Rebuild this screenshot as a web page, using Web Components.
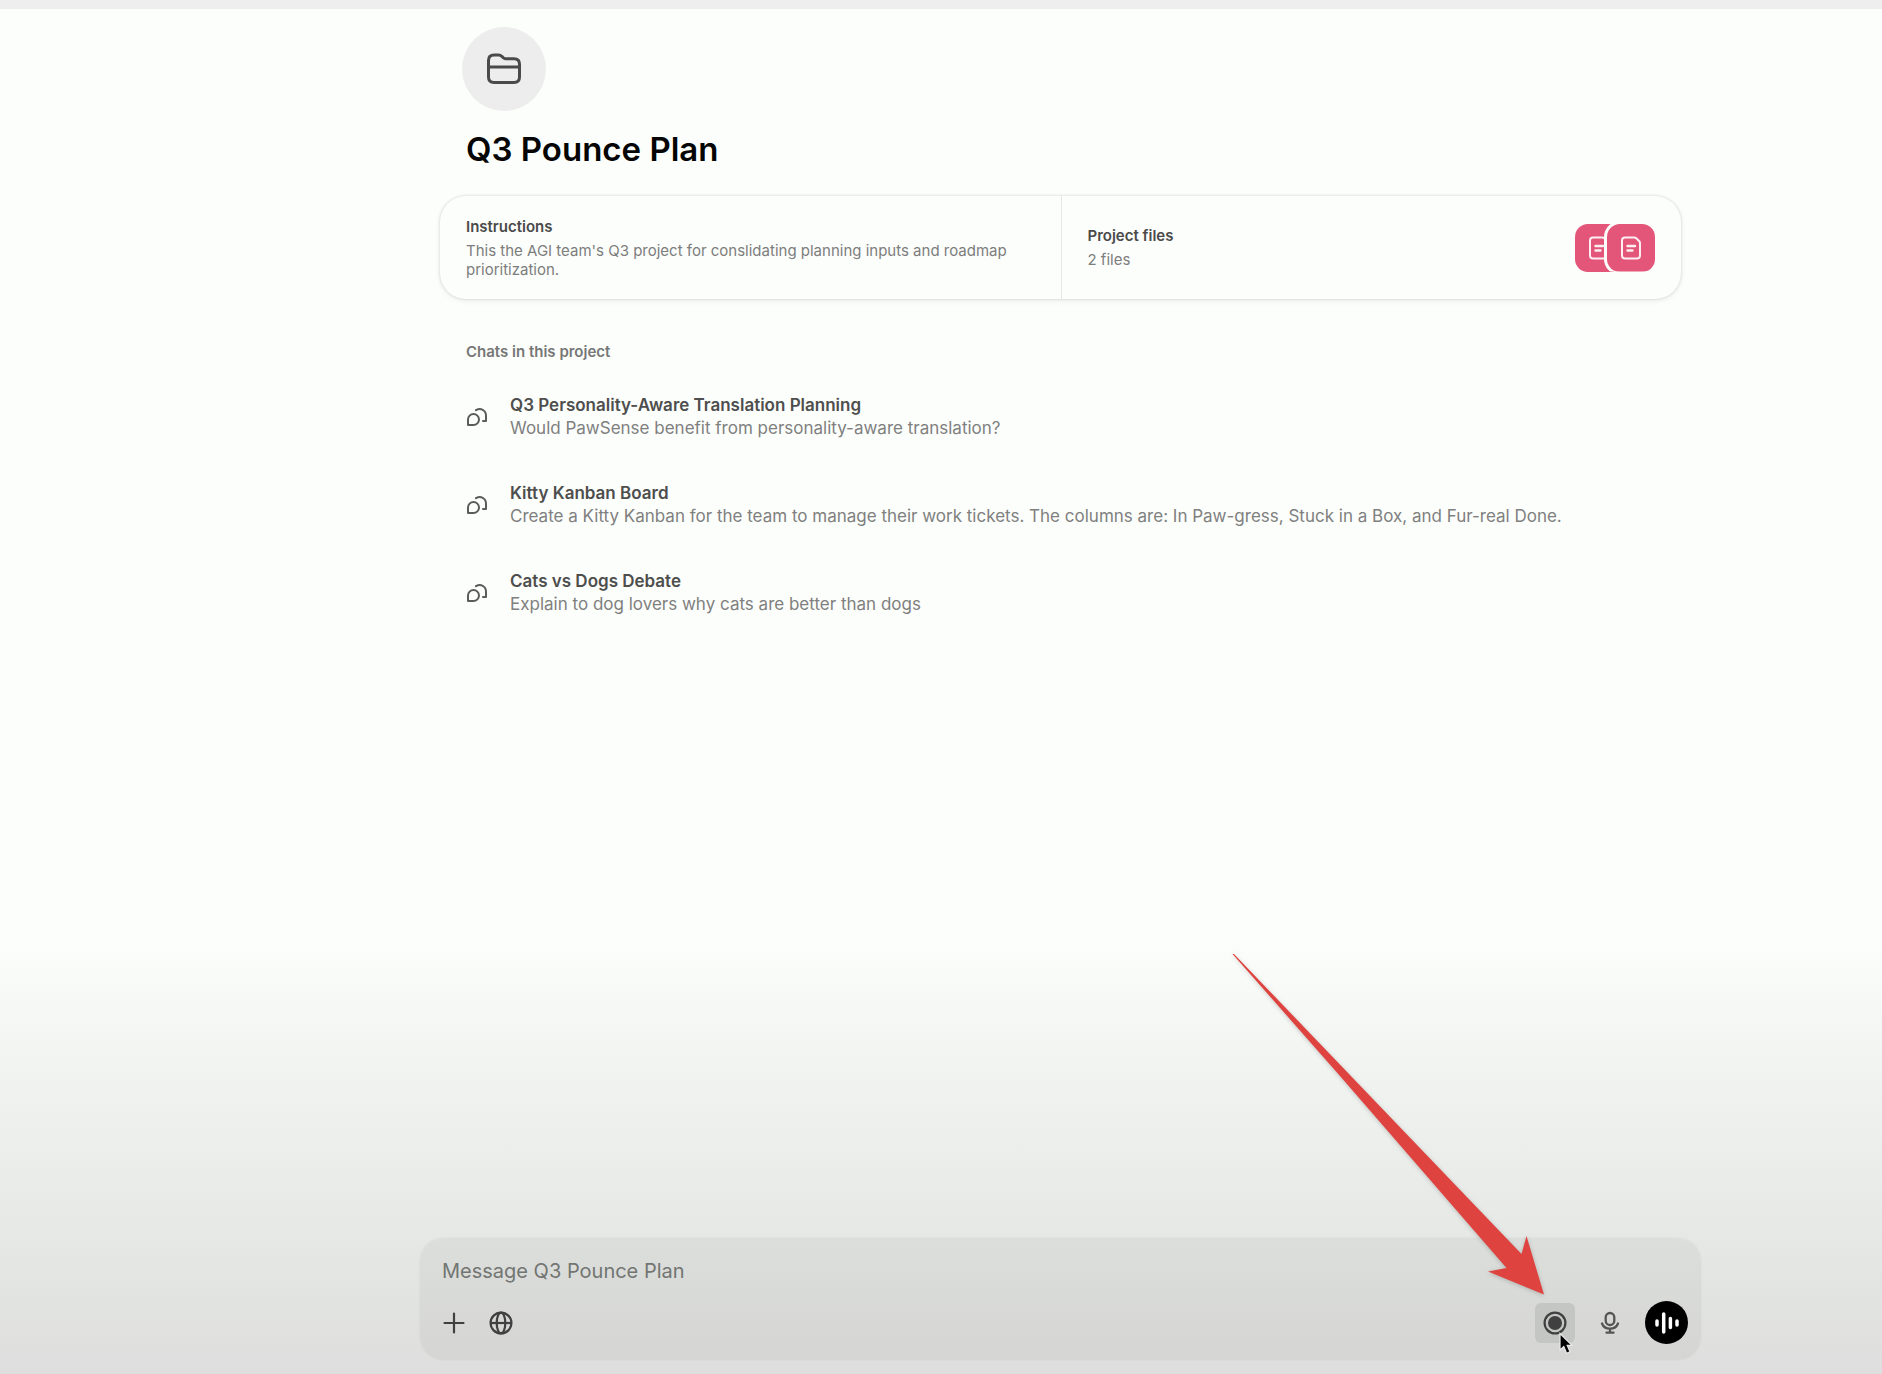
<!DOCTYPE html>
<html lang="en">
<head>
<meta charset="utf-8">
<meta name="viewport" content="width=device-width, initial-scale=1">
<title>Q3 Pounce Plan</title>
<style>
body {
    margin: 0;
    font-family: Inter, "Liberation Sans", sans-serif;
}
</style>
</head>
<body>

<project-page>
    <project-header slot="header">Q3 Pounce Plan</project-header>

    <project-summary>
        <span slot="instructions">This the AGI team's Q3 project for conslidating planning inputs and roadmap prioritization.</span>
        <span slot="files">2 files</span>
    </project-summary>

    <chat-list heading="Chats in this project">
        <chat-item heading="Q3 Personality-Aware Translation Planning">Would PawSense benefit from personality-aware translation?</chat-item>
        <chat-item heading="Kitty Kanban Board">Create a Kitty Kanban for the team to manage their work tickets. The columns are: In Paw-gress, Stuck in a Box, and Fur-real Done.</chat-item>
        <chat-item heading="Cats vs Dogs Debate">Explain to dog lovers why cats are better than dogs</chat-item>
    </chat-list>

    <message-composer slot="footer" placeholder="Message Q3 Pounce Plan"></message-composer>
</project-page>

<script>
// small helper: every element clones its own markup into an open shadow root
class BaseElement extends HTMLElement {
    constructor() {
        super();
        this.attachShadow({ mode: "open" });
        const template = document.createElement("template");
        template.innerHTML = this.constructor.markup;
        this.shadowRoot.appendChild(template.content.cloneNode(true));
    }
}

class ProjectPage extends BaseElement {
    static markup = `
<style>
:host {
    display: flex;
    flex-direction: column;
    box-sizing: border-box;
    min-height: 100vh;
    padding-left: 239px;
    background: linear-gradient(#fcfefb 0, #fcfefb 68%, #f2f4f1 77%, #e6e8e5 90%, #dddedd 100%);
    border-top: 9px solid #edeeed;
}

main {
    flex-grow: 1;
    width: 100%;
    max-width: 1241px;
    margin: 0 auto;
}

footer {
    width: 100%;
    max-width: 1279px;
    margin: 0 auto;
    padding-bottom: 15px;
}
</style>
<main>
    <slot name="header"></slot>
    <slot></slot>
</main>
<footer><slot name="footer"></slot></footer>`;
}

class ProjectHeader extends BaseElement {
    static markup = `
<style>
:host {
    display: block;
    padding: 18px 22px 0;
}

.badge {
    display: flex;
    align-items: center;
    justify-content: center;
    width: 84px;
    height: 84px;
    padding: 0;
    border: 0;
    border-radius: 50%;
    background: #ecedec;
    color: #4a4a4a;
}

h1 {
    margin: 17px 4px 0;
    font-size: 33px;
    line-height: 42px;
    font-weight: 600;
    color: #050505;
}
</style>
<button class="badge" aria-label="Project icon">
    <svg width="36" height="34" viewBox="0 0 36 34" fill="none" stroke="currentColor" stroke-width="3" stroke-linejoin="round">
        <path d="M2.500 25V8.500Q2.500 3 8 3H12.500Q14.500 3 16 4.500L17.500 5.800Q18.600 6.700 20 6.700H28Q33.500 6.700 33.500 12.200V25Q33.500 30.500 28 30.500H8Q2.500 30.500 2.500 25Z"/>
        <path d="M3 15H33"/>
    </svg>
</button>
<h1><slot></slot></h1>`;
}

class FileBadge extends BaseElement {
    static markup = `
<style>
:host {
    display: flex;
    align-items: center;
    justify-content: center;
    width: 48px;
    height: 48px;
    border-radius: 13px;
    background: #e3567a;
    color: #fdeef2;
}
</style>
<svg width="22" height="26" viewBox="0 0 22 26" fill="none" stroke="currentColor" stroke-width="2" stroke-linejoin="round" stroke-linecap="round">
    <path d="M5 2.500H14.500Q15.500 2.500 16.200 3.200L19.300 6.300Q20 7 20 8V20.500Q20 23.500 17 23.500H5Q2 23.500 2 20.500V5.500Q2 2.500 5 2.500Z"/>
    <path d="M7.500 11H15M7.500 15.500H12.500" stroke-width="2.400"/>
</svg>`;
}

class ProjectSummary extends BaseElement {
    static markup = `
<style>
:host {
    display: grid;
    grid-template-columns: 1fr 1fr;
    margin-top: 26px;
    border-radius: 26px;
    background: #fcfefb;
    box-shadow: 0 0 3px rgba(0, 0, 0, 0.16), 0 2px 6px rgba(0, 0, 0, 0.06);
}

button {
    display: flex;
    align-items: center;
    justify-content: space-between;
    min-height: 103px;
    padding: 16px 26px;
    border: 0;
    background: none;
    font: inherit;
    font-size: 15px;
    line-height: 19px;
    text-align: left;
    color: #7d7d7d;
}

button + button {
    border-left: 1px solid #e6e7e6;
}

strong {
    display: block;
    margin-bottom: 5px;
    font-weight: 600;
    color: #4a4a4a;
}

.files {
    display: flex;
}

file-badge + file-badge {
    margin-left: -16px;
    box-shadow: 0 0 0 3px #fcfefb;
    clip-path: inset(0 0 0 -3px);
}
</style>
<button>
    <span><strong>Instructions</strong><slot name="instructions"></slot></span>
</button>
<button>
    <span><strong>Project files</strong><slot name="files"></slot></span>
    <span class="files"><file-badge></file-badge><file-badge></file-badge></span>
</button>`;
}

class ChatList extends BaseElement {
    static markup = `
<style>
:host {
    display: block;
    margin-top: 43px;
    padding: 0 26px;
}

h2 {
    margin: 0 0 11px;
    font-size: 15px;
    line-height: 20px;
    font-weight: 600;
    color: #767776;
}
</style>
<h2></h2>
<div role="list"><slot></slot></div>`;

    connectedCallback() {
        this.shadowRoot.querySelector("h2").textContent = this.getAttribute("heading");
    }
}

class ChatItem extends BaseElement {
    static markup = `
<style>
:host {
    display: block;
}

a {
    display: flex;
    align-items: center;
    gap: 22px;
    height: 88px;
    font-size: 17px;
    line-height: 23px;
    color: #7f807f;
    text-decoration: none;
}

svg {
    flex-shrink: 0;
    color: #5c5c5c;
}

strong {
    display: block;
    font-weight: 600;
    color: #4e4e4e;
}
</style>
<a href="#">
    <svg width="22" height="20" viewBox="0 0 22 20" fill="none" stroke="currentColor" stroke-width="2" stroke-linejoin="round" stroke-linecap="round">
        <path d="M2 18V12.500A5.500 5.500 0 1 1 7.500 18Z"/>
        <path d="M10 3.200C14.500 .500 20 3 20 8.500V14H17"/>
    </svg>
    <span><strong></strong><slot></slot></span>
</a>`;

    connectedCallback() {
        this.setAttribute("role", "listitem");
        this.shadowRoot.querySelector("strong").textContent = this.getAttribute("heading");
    }
}

class PointerArrow extends BaseElement {
    // red annotation arrow, hangs off the element it points at
    static markup = `
<style>
:host {
    display: block;
    pointer-events: none;
}

svg {
    display: block;
    filter: drop-shadow(0 1px 2px rgba(0, 0, 0, 0.2));
}
</style>
<svg width="324" height="352" viewBox="0 0 324 352" aria-hidden="true">
    <path fill="#de433f" d="M5.500 6L7 6L294.500 306L299.500 288L317 346.500L261 323.500L279.500 320L113 128Z"/>
</svg>`;
}

class MessageComposer extends BaseElement {
    static markup = `
<style>
:host {
    display: block;
    box-sizing: border-box;
    padding: 18px 12px 15px 21px;
    border-radius: 22px;
    background: linear-gradient(#dcdedb, #d5d6d4);
    box-shadow: 0 0 3px rgba(0, 0, 0, 0.12);
}

input {
    display: block;
    box-sizing: border-box;
    width: 100%;
    height: 28px;
    padding: 0;
    border: 0;
    outline: 0;
    background: none;
    font: inherit;
    font-size: 20px;
    color: #333333;
}

input::placeholder {
    color: #727572;
    opacity: 1;
}

.tools {
    display: flex;
    align-items: center;
    margin-top: 16px;
}

button {
    display: flex;
    align-items: center;
    justify-content: center;
    padding: 0;
    border: 0;
    background: none;
    color: #404040;
}

.left {
    display: flex;
    gap: 23px;
}

.right {
    display: flex;
    align-items: center;
    gap: 23px;
    margin-left: auto;
}

.record-wrap {
    position: relative;
}

.record {
    width: 40px;
    height: 40px;
    border-radius: 6px;
    background: #c4c6c4;
}

pointer-arrow {
    position: absolute;
    right: 24px;
    bottom: 43px;
}

.cursor {
    position: absolute;
    left: 23px;
    top: 29px;
}

.voice {
    width: 43px;
    height: 43px;
    border-radius: 50%;
    background: #000000;
    color: #ffffff;
}
</style>
<input type="text" aria-label="Message">
<div class="tools">
    <div class="left">
        <button aria-label="Add">
            <svg width="24" height="24" viewBox="0 0 24 24" fill="none" stroke="currentColor" stroke-width="2.200" stroke-linecap="round">
                <path d="M12 2.500V21.500M2.500 12H21.500"/>
            </svg>
        </button>
        <button aria-label="Search the web">
            <svg width="24" height="24" viewBox="0 0 24 24" fill="none" stroke="currentColor" stroke-width="2.200">
                <circle cx="12" cy="12" r="10.400"/>
                <ellipse cx="12" cy="12" rx="4.300" ry="10.400"/>
                <path d="M2 12H22"/>
            </svg>
        </button>
    </div>
    <div class="right">
        <div class="record-wrap">
            <button class="record" aria-label="Record">
                <svg width="24" height="24" viewBox="0 0 24 24">
                    <circle cx="12" cy="12" r="10.400" fill="none" stroke="currentColor" stroke-width="2.200"/>
                    <circle cx="12" cy="12" r="7" fill="currentColor"/>
                </svg>
            </button>
            <pointer-arrow></pointer-arrow>
            <svg class="cursor" width="18" height="24" viewBox="0 0 18 24" aria-hidden="true">
                <path d="M2 1.500V18L5.800 14.600L8.600 21.200L12 19.800L9.200 13.400H14Z" fill="#000000" stroke="#e8e8e8" stroke-width="1.200"/>
            </svg>
        </div>
        <button aria-label="Dictate">
            <svg width="24" height="24" viewBox="0 0 24 24" fill="none" stroke="#555555" stroke-width="2.300" stroke-linecap="round">
                <rect x="7.700" y="2" width="8.600" height="12" rx="4.300"/>
                <path d="M4 12.500Q6 17.700 12 17.700T20 12.500M12 17.700V21.500M8.500 21.700H15.500"/>
            </svg>
        </button>
        <button class="voice" aria-label="Voice mode">
            <svg width="26" height="24" viewBox="0 0 26 24" fill="none" stroke="currentColor" stroke-width="3.500" stroke-linecap="round">
                <path d="M3 10V14M9.700 3V21M16.400 7.500V16.500M23 10V14"/>
            </svg>
        </button>
    </div>
</div>`;

    connectedCallback() {
        this.shadowRoot.querySelector("input").placeholder = this.getAttribute("placeholder");
    }
}

customElements.define("project-page", ProjectPage);
customElements.define("project-header", ProjectHeader);
customElements.define("file-badge", FileBadge);
customElements.define("project-summary", ProjectSummary);
customElements.define("chat-list", ChatList);
customElements.define("chat-item", ChatItem);
customElements.define("pointer-arrow", PointerArrow);
customElements.define("message-composer", MessageComposer);
</script>
</body>
</html>
